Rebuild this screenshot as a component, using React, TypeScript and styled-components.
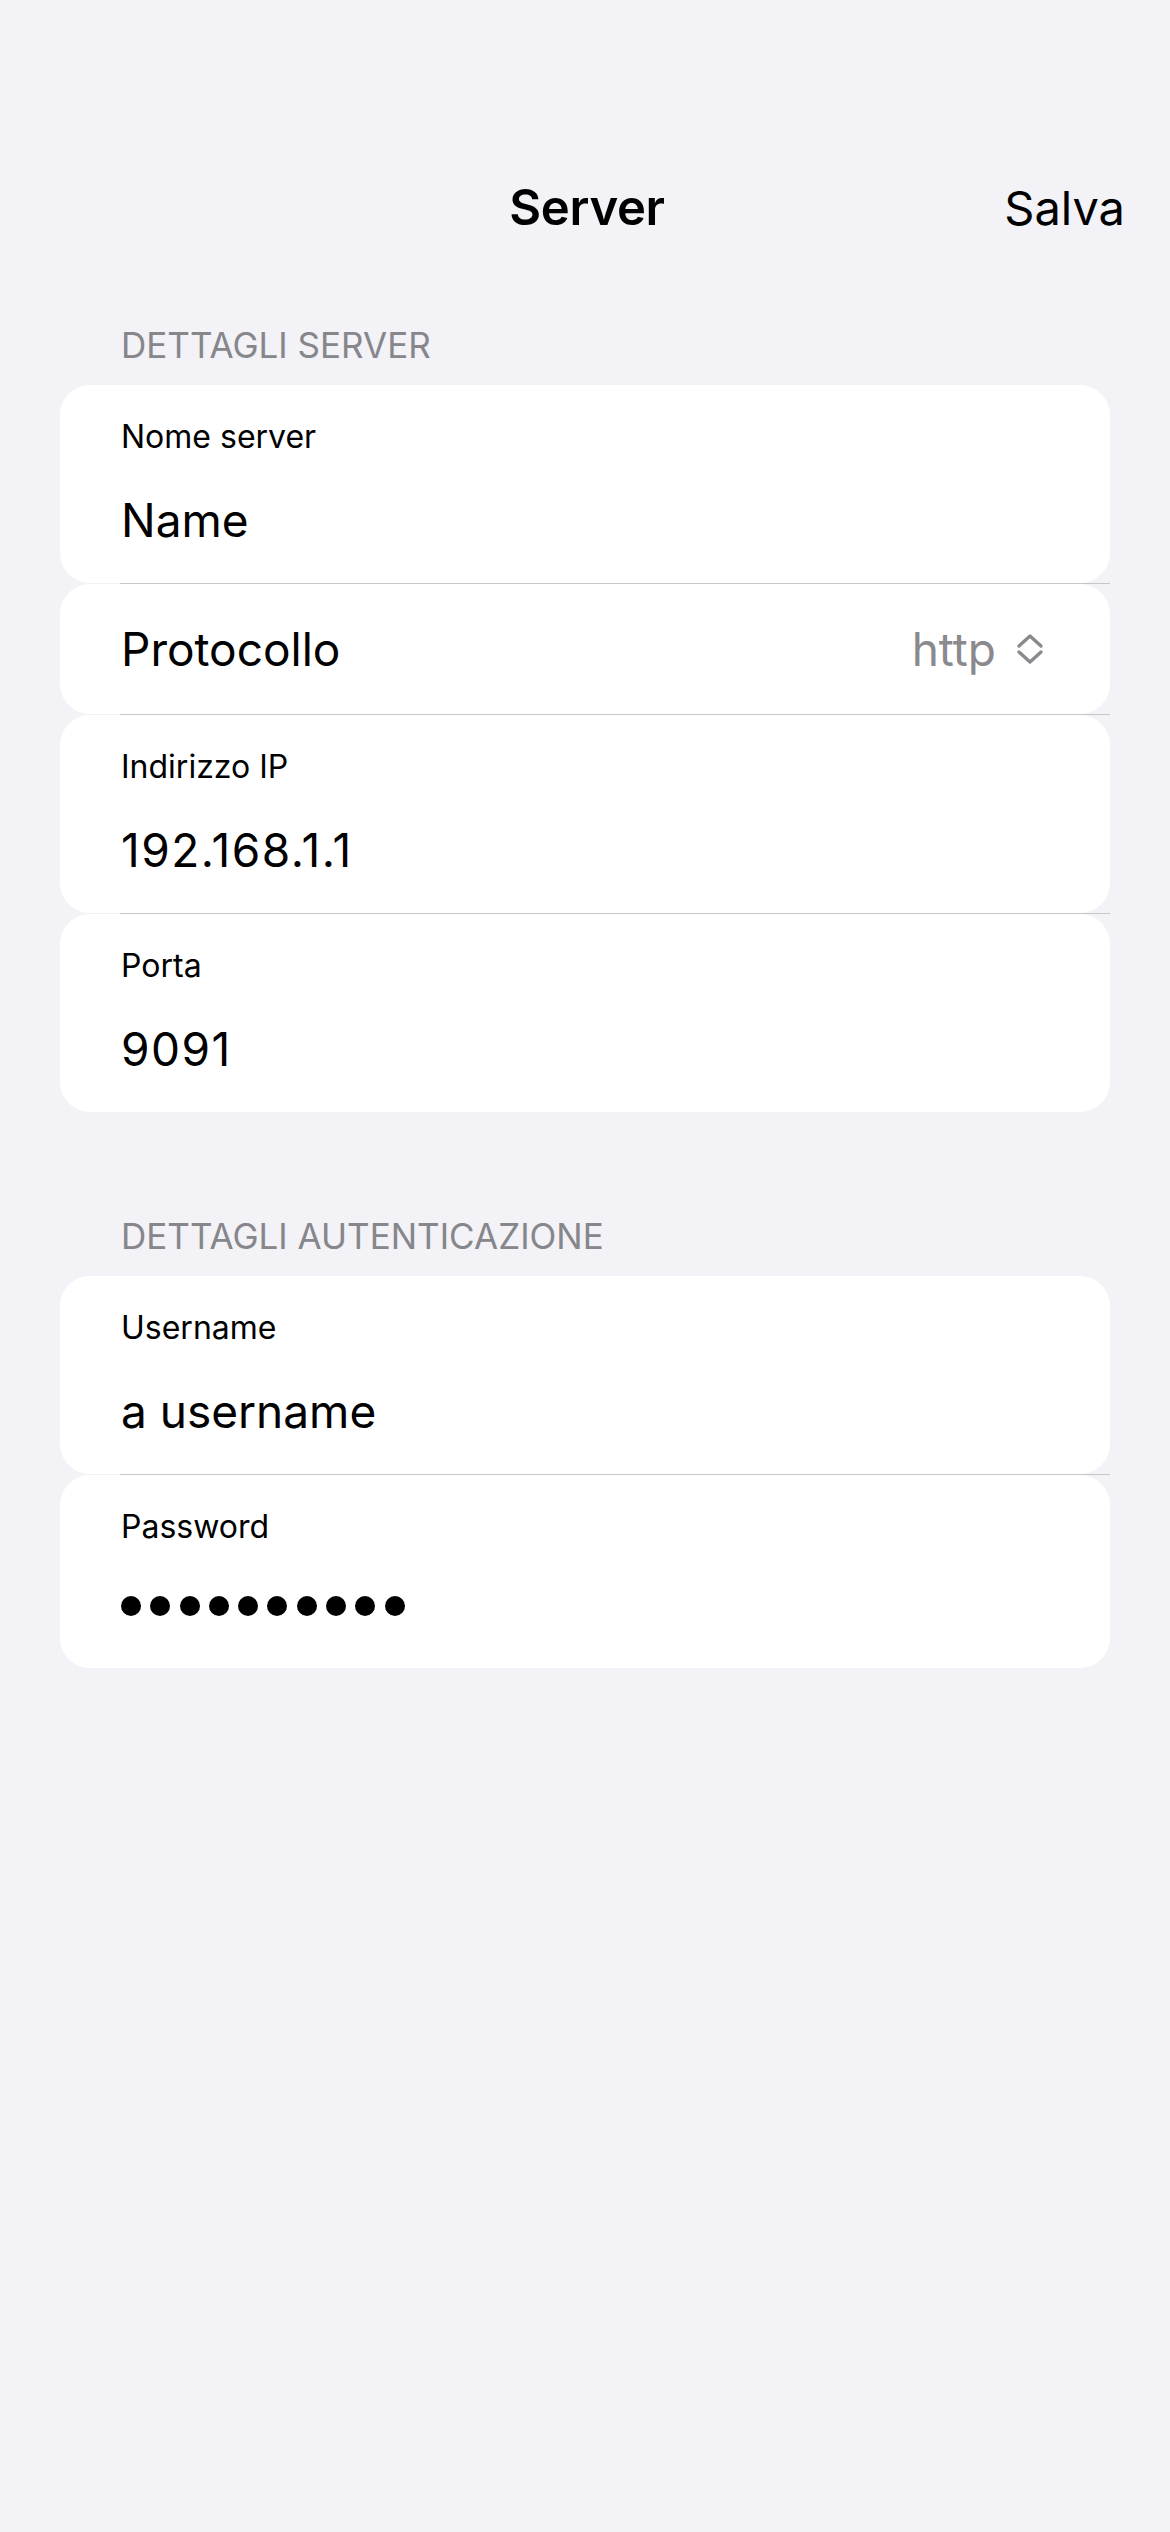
import React from "react";
import styled, { createGlobalStyle } from "styled-components";

const GlobalStyle = createGlobalStyle`
  html, body {
    margin: 0;
    padding: 0;
    background: #f2f2f7;
  }
  body {
    font-family: Inter, "Noto Sans", "Liberation Sans", sans-serif;
    -webkit-font-smoothing: antialiased;
  }
  * { box-sizing: border-box; }
`;

const Screen = styled.div`
  min-height: 2532px;
  background: #f2f2f7;
  padding-top: 150px;
  color: #000;
`;

const NavBar = styled.header`
  display: grid;
  grid-template-columns: 1fr auto 1fr;
  align-items: center;
  height: 116px;
  padding: 0 45px 0 49px;
`;

const Title = styled.h1`
  grid-column: 2;
  margin: 0;
  font-size: 49px;
  font-weight: 600;
  line-height: 116px;
  letter-spacing: -0.3px;
`;

const SaveButton = styled.button`
  grid-column: 3;
  justify-self: end;
  border: none;
  background: none;
  padding: 0;
  font-family: inherit;
  font-size: 47px;
  font-weight: 400;
  line-height: 116px;
  color: #000;
`;

const Content = styled.main`
  padding: 0 60px;
`;

const Section = styled.section<{ $gap: number }>`
  margin-top: ${(p) => p.$gap}px;
`;

const SectionHeader = styled.h2`
  margin: 0 0 19px;
  padding-left: 61px;
  font-size: 35px;
  font-weight: 400;
  line-height: 42px;
  color: #86868b;
  text-transform: uppercase;
`;

const Group = styled.div`
  display: flex;
  flex-direction: column;
`;

const Card = styled.div<{ $bottom?: number }>`
  display: flex;
  flex-direction: column;
  gap: 35px;
  background: #fff;
  border-radius: 30px;
  padding: 32px 61px ${(p) => p.$bottom ?? 35}px;
`;

const PickerCard = styled.div`
  display: flex;
  align-items: center;
  justify-content: space-between;
  height: 130px;
  background: #fff;
  border-radius: 30px;
  padding: 0 66px 0 61px;
`;

const Label = styled.span`
  font-size: 32px;
  line-height: 40px;
  color: #000;
`;

const Value = styled.span<{ $muted?: boolean; $numeric?: boolean }>`
  font-size: 46px;
  line-height: 56px;
  letter-spacing: ${(p) => (p.$numeric ? "1.5px" : "0")};
  color: ${(p) => (p.$muted ? "#8a8a8e" : "#000")};
`;

const PickerValue = styled.div`
  display: flex;
  align-items: center;
  gap: 20px;
`;

const Separator = styled.div`
  height: 1px;
  margin-left: 60px;
  background: #c6c6c8;
`;

const DotRow = styled.div`
  display: flex;
  align-items: center;
  gap: 9.3px;
  height: 56px;
  padding-bottom: 8px;
`;

const Dot = styled.span`
  width: 20px;
  height: 20px;
  border-radius: 50%;
  background: #000;
`;

const Chevrons = () => (
  <svg width="28" height="32" viewBox="0 0 28 32" fill="none" aria-hidden>
    <path
      d="M3 13 L14 3 L25 13 M3 19 L14 29 L25 19"
      stroke="#8a8a8e"
      strokeWidth="3.4"
      strokeLinecap="round"
      strokeLinejoin="round"
    />
  </svg>
);

const TextField = ({
  label,
  value,
  numeric,
}: {
  label: string;
  value: string;
  numeric?: boolean;
}) => (
  <Card>
    <Label>{label}</Label>
    <Value $numeric={numeric}>{value}</Value>
  </Card>
);

export default function App() {
  return (
    <>
      <GlobalStyle />
      <Screen>
        <NavBar>
          <Title>Server</Title>
          <SaveButton>Salva</SaveButton>
        </NavBar>
        <Content>
          <Section $gap={58}>
            <SectionHeader>Dettagli server</SectionHeader>
            <Group>
              <TextField label="Nome server" value="Name" />
              <Separator />
              <PickerCard>
                <Value>Protocollo</Value>
                <PickerValue>
                  <Value $muted>http</Value>
                  <Chevrons />
                </PickerValue>
              </PickerCard>
              <Separator />
              <TextField label="Indirizzo IP" value="192.168.1.1" numeric />
              <Separator />
              <TextField label="Porta" value="9091" numeric />
            </Group>
          </Section>
          <Section $gap={103}>
            <SectionHeader>Dettagli autenticazione</SectionHeader>
            <Group>
              <TextField label="Username" value="a username" />
              <Separator />
              <Card $bottom={30}>
                <Label>Password</Label>
                <DotRow aria-label="password">
                  {Array.from({ length: 10 }).map((_, i) => (
                    <Dot key={i} />
                  ))}
                </DotRow>
              </Card>
            </Group>
          </Section>
        </Content>
      </Screen>
    </>
  );
}
